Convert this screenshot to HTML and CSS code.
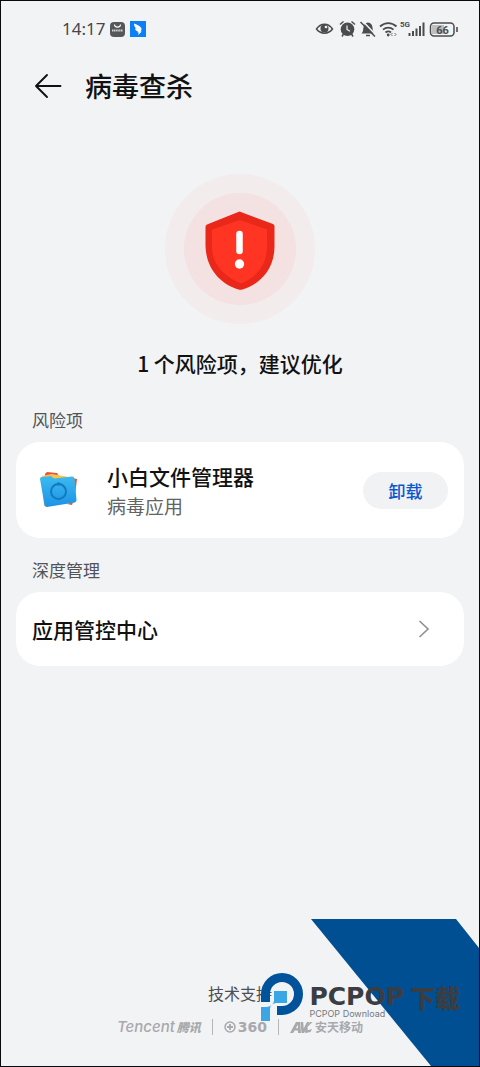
FILE: index.html
```html
<!DOCTYPE html>
<html lang="zh-CN">
<head>
<meta charset="utf-8">
<meta name="viewport" content="width=device-width, initial-scale=1">
<title>病毒查杀</title>
<link rel="stylesheet" href="styles.css">
</head>
<body>
<div class="screen">
  <div class="status">
    <span class="clock">14:17</span>
    <svg class="badge" width="15" height="15" viewBox="0 0 15 15"><rect width="15" height="15" rx="4" fill="#55575a"/><path d="M4.500 2.500a3 2.600 0 0 0 6 0" fill="none" stroke="#fff" stroke-width="1.100"/><path d="M2 8.500h11" stroke="#d5d6d8" stroke-width="2" stroke-dasharray="1.300 .5"/></svg>
    <svg class="badge" width="16" height="16" viewBox="0 0 16 16"><rect width="16" height="16" fill="#0b7ff5"/><path d="M4 2.500c2.500 1 6 2.300 7.300 4.500.7 1.200-.1 2.500-.8 3.500h1.300L8 14.200l.8-2.700H7.500l.5-1C6 10 5.200 8.700 5 7.500l1.500.3C4.800 6.500 4 4.800 4 2.500z" fill="#fff"/></svg>
    <svg class="tray" width="146" height="20" viewBox="0 0 146 20" fill="none" stroke="#4a4c4f" stroke-width="1.500">
      <g transform="translate(2 0)"><path d="M1.500 10C5.500 3.500 13.500 3.500 17.500 10 13.500 15.500 5.500 15.500 1.500 10z"/><circle cx="9.500" cy="9.500" r="4" fill="#4a4c4f" stroke="none"/><circle cx="11" cy="8" r="1.300" fill="#f2f3f5" stroke="none"/></g>
      <g transform="translate(2.500 0)"><circle cx="32" cy="10.300" r="6.800" fill="#4a4c4f" stroke="none"/><path d="M24.500 5.500l3.500-3M39.500 5.500l-3.500-3M28 15l-1.500 2.500M36 15l1.500 2.500"/><path d="M31.500 6.500V10.500l3 1.800" stroke="#f2f3f5" stroke-width="1.200"/></g>
      <g transform="translate(3 0)"><path d="M45.500 14.500c2-2 1.500-4 2-6.500.5-2.500 1.800-4 4.500-4.500 2.700.5 4.200 2 4.500 5 .2 2 .2 4 2 6z" fill="#4a4c4f" stroke="none"/><path d="M50 16.500h4"/><path d="M46.500 2l14 14.500" stroke="#f2f3f5" stroke-width="1.600"/><path d="M44.500 3l14.500 14.500"/></g>
      <g transform="translate(2.500 0)"><path d="M64.500 7.500c5-4.500 11.500-4.500 16.500 0M67.500 10.700c3-2.700 7.500-2.700 10.500 0M70 13.500c1.800-1.500 3.800-1.500 5.500 0" stroke-width="1.700"/><circle cx="72.700" cy="16" r="1.400" fill="#4a4c4f" stroke="none"/><path d="M77 14l-1.500 1.500L77 17M79 14l1.500 1.500L79 17" stroke-width=".8"/></g>
      <path d="M96.500 17v-3M100 17v-5M103.500 17V9.500M107 17V7M110.500 17V3.500" stroke-width="2"/>
      <text class="net" x="87" y="8">5G</text>
      <rect x="117.500" y="4" width="23.500" height="13" rx="3.500"/><rect x="119" y="6" width="12" height="9" fill="#bcbec1" stroke="none"/><path d="M144 8v5" stroke-width="1.600"/>
      <text class="level" x="129.500" y="14.500" text-anchor="middle">66</text>
    </svg>
  </div>

  <header class="bar">
    <button class="back" aria-label="返回"><svg width="28" height="26" viewBox="0 0 28 26" fill="none" stroke="#111" stroke-width="1.900" stroke-linecap="round" stroke-linejoin="round"><path d="M13 2L2 13l11 11M2 13h24.500"/></svg></button>
    <h1>病毒查杀</h1>
  </header>

  <main>
    <section class="hero">
      <svg width="152" height="152" viewBox="0 0 152 152">
        <circle cx="76" cy="76" r="75" fill="#f3eced"/><circle cx="76" cy="76" r="56" fill="#f4e1e2"/>
        <path d="M75.500 38.500L109 51q1.500.8 1.500 2.500V73c0 23-14 38-32 43.500q-2 .6-4 0C56 111 42 95 41.500 73V54q0-2 1.500-2.500z" fill="#e92819"/>
        <path d="M76 47l27 9.500V74c0 17-10 30-25.500 36.500C60 104 48 91 48 74V56.500z" fill="#ff3422"/>
        <path d="M75.500 61v17" stroke="#fff" stroke-width="6.500" stroke-linecap="round"/><circle cx="75.500" cy="91" r="4.700" fill="#fff"/>
      </svg>
      <p>1 个风险项，建议优化</p>
    </section>

    <h2>风险项</h2>
    <div class="card risk">
      <svg width="38" height="38" viewBox="0 0 38 38">
        <defs><linearGradient id="folder" x1="0" y1="0" x2="0" y2="1"><stop offset="0" stop-color="#3cbbee"/><stop offset="1" stop-color="#1c92e8"/></linearGradient></defs>
        <path d="M5 3l2-2 10 1 2 3 18 3-3 24-27-3z" fill="#e8533a"/><path d="M2 5l10-2 22 4 0 25-30 3z" fill="#f8c34a"/><path d="M27 33l5 1 1-3z" fill="#e8533a"/>
        <path d="M0 8q0-2 2-2l9-1 3 2.500 18-2q2 0 2.500 2l2 21.500q0 2-2 2.500L7 36q-2 0-2.500-2z" fill="url(#folder)"/>
        <circle cx="18.500" cy="20.500" r="7.500" fill="none" stroke="#1479bd" stroke-width="2"/><path d="M17 11.500h3v3h-3z" fill="#1479bd"/>
      </svg>
      <div class="info"><strong>小白文件管理器</strong><span>病毒应用</span></div>
      <button class="pill">卸载</button>
    </div>

    <h2>深度管理</h2>
    <a class="card link" href="#control">应用管控中心
      <svg width="12" height="18" viewBox="0 0 12 18" fill="none" stroke="#919294" stroke-width="1.700"><path d="M1.500 1l8.500 8-8.500 8"/></svg>
    </a>
  </main>

  <footer>
    <p>技术支持</p>
    <div class="partners">
      <span class="tencent"><i>Tencent</i><b>腾讯</b></span>
      <span class="qihoo"><svg width="12" height="12" viewBox="0 0 12 12" fill="none" stroke="#a7a9ac"><circle cx="6" cy="6" r="5" stroke-width="1.500"/><path d="M6 3v6M3 6h6" stroke-width="1.800"/></svg>360</span>
      <span class="avl"><svg width="23" height="12" viewBox="0 0 23 12" fill="#a7a9ac"><path d="M0 12L6 1h4l1 11H8V9.500H4.500L3.200 12zM5.800 7.200H8V3.500z"/><path d="M10.500 1h2.700l.5 6.500L17 1h2.500L14 12h-2.500z"/><path d="M22.500 1l-5 5 .3 3.300L22 8l-1.500 3-5 1-.8-1.200 1.800-5L20 1z"/></svg>安天移动</span>
    </div>
  </footer>

  <div class="watermark">
    <svg class="ribbon" width="168" height="147" viewBox="0 0 168 147"><path d="M0 0h145l23 29v118H120z" fill="#004f93"/></svg>
    <div class="brand">
      <svg width="42" height="49" viewBox="0 0 42 49"><path d="M4.500 29V21A16.500 16.500 0 1 1 21 37.500H16" fill="none" stroke="#00529b" stroke-width="9"/><path d="M13 18h13v12H15q-6 1-6 6v12H0V34h6q6-1 7-6z" fill="#3aa6e5"/></svg>
      <div class="words"><div class="name"><span>PCPOP</span><b>下载</b></div><small>PCPOP Download</small></div>
    </div>
  </div>
</div>
</body>
</html>
```
FILE: styles.css
```css
* { box-sizing: border-box; }
body { margin: 0; font-family: "Noto Sans", "Noto Sans CJK SC", sans-serif; color: #111; }
h1, h2, p { margin: 0; font-weight: 500; }
svg { display: block; flex: none; }
button { border: 0; padding: 0; font: inherit; cursor: pointer; }

.screen {
  position: relative;
  display: flex;
  flex-direction: column;
  min-height: 100vh;
  padding: 0 15px;
  border: 1px solid #080a0e;
  background: #f2f3f5;
  overflow: hidden;
}

.status { display: flex; align-items: center; gap: 5px; padding: 16px 5px 0 46px; height: 40px; }
.clock { font-size: 17px; line-height: 24px; color: #45474a; }
.tray { margin-left: auto; }
.net { font: bold 8px Roboto, sans-serif; fill: #4a4c4f; stroke: none; }
.level { font: bold 11px Roboto, sans-serif; fill: #4a4c4f; stroke: none; }

.bar { display: flex; align-items: center; gap: 23px; height: 90px; padding-left: 18px; }
.back { background: none; color: #111; }
h1 { font-family: "Noto Sans CJK SC", sans-serif; font-size: 27px; line-height: 40px; }

.hero { display: flex; flex-direction: column; align-items: center; gap: 20px; padding: 42px 0 27px; }
.hero p { font: 500 21px/36px "Noto Sans CJK SC", sans-serif; }

h2 { padding: 0 16px; font: 400 17px/24px "Noto Sans CJK SC", sans-serif; color: #515356; }
.card { display: flex; align-items: center; margin: 10px 0 20px; padding: 0 16px; border-radius: 24px; background: #fff; font-family: "Noto Sans CJK SC", sans-serif; }
.risk { min-height: 96px; padding-left: 24px; gap: 29px; }
.info { display: flex; flex-direction: column; flex: 1; padding-top: 2px; }
.info strong { font-size: 21px; line-height: 30px; font-weight: 500; }
.info span { font-size: 19px; line-height: 30px; color: #626365; }
.pill { width: 85px; height: 37px; border-radius: 19px; background: #f1f2f3; color: #0b57d0; font-size: 17px; font-weight: 500; }
.link { justify-content: space-between; min-height: 74px; padding-right: 34px; color: #111; font-size: 21px; line-height: 32px; font-weight: 500; text-decoration: none; }

footer { margin-top: auto; padding-bottom: 31px; text-align: center; }
footer p { font: 400 16px/24px "Noto Sans CJK SC", sans-serif; color: #4d4f52; }
.partners { display: flex; justify-content: center; margin-top: 14px; font: 700 12px/16px "Noto Sans CJK SC", sans-serif; color: #a7a9ac; }
.partners > span { display: flex; align-items: center; gap: 2px; padding: 0 11px; }
.partners > span + span { border-left: 1px solid #b4b6b9; }
.tencent i { font: italic 500 15px/16px Inter, sans-serif; }
.tencent b { font-size: 12px; font-style: italic; }
.qihoo { font: 700 14px/16px "DejaVu Sans", sans-serif; }

.watermark { position: absolute; right: 0; bottom: 0; pointer-events: none; }
.brand { position: absolute; right: 19px; bottom: 44px; display: flex; align-items: flex-start; gap: 6px; color: #3a3d42; white-space: nowrap; }
.words { padding-top: 12px; }
.name { display: flex; align-items: center; gap: 6px; height: 24px; }
.name span { font: 700 25px/24px "DejaVu Sans", sans-serif; }
.name b { font: 900 25px/24px "Noto Sans CJK SC", sans-serif; }
.brand small { display: block; font: 400 9px/10px Inter, sans-serif; color: #77797d; }
```
